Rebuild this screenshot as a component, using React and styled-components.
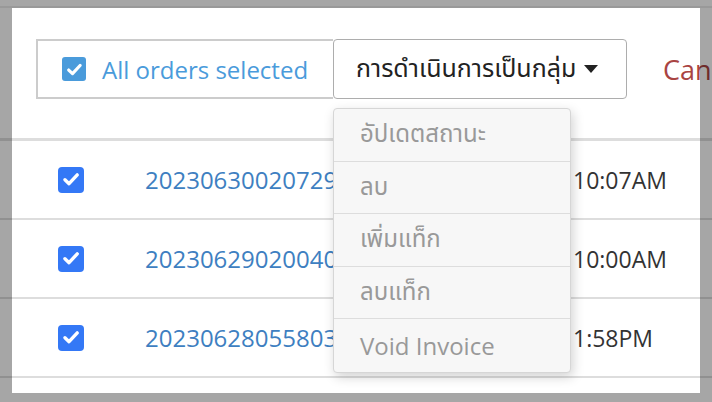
import styled, { createGlobalStyle } from "styled-components";

const GlobalStyle = createGlobalStyle`
  body {
    margin: 0;
    background: #ffffff;
    font-family: "Open Sans", "Noto Sans", "Noto Sans Thai", sans-serif;
  }
`;

const Page = styled.div`
  position: relative;
  width: 712px;
  height: 402px;
  overflow: hidden;
  background: #ffffff;
`;

const TopRule = styled.div`
  height: 6px;
  border-bottom: 2px solid #ebebeb;
`;

const Toolbar = styled.div`
  display: flex;
  align-items: center;
  height: 133px;
  box-sizing: border-box;
  padding-left: 36px;
  padding-bottom: 8px;
  border-bottom: 3px solid #dddddd;
`;

const SelectAllBox = styled.div`
  display: flex;
  align-items: center;
  flex: none;
  gap: 16px;
  width: 297px;
  height: 60px;
  box-sizing: border-box;
  padding-left: 24px;
  border: 2px solid #cccccc;
  border-right: none;
`;

const SelectAllText = styled.span`
  font-size: 24px;
  color: #4a9bdb;
  white-space: nowrap;
`;

const BulkButton = styled.button`
  display: flex;
  align-items: center;
  flex: none;
  gap: 8px;
  width: 294px;
  height: 60px;
  box-sizing: border-box;
  padding: 0 0 0 22px;
  background: #ffffff;
  border: 1.5px solid #adadad;
  border-radius: 4px;
  font-family: "Open Sans", "Noto Sans", "Noto Sans Thai", sans-serif;
  font-size: 25px;
  color: #222222;
  white-space: nowrap;
`;

const Caret = styled.span`
  width: 0;
  height: 0;
  border-left: 7px solid transparent;
  border-right: 7px solid transparent;
  border-top: 8px solid #222222;
`;

const CancelLink = styled.span`
  flex: none;
  margin-left: 36px;
  font-size: 27px;
  color: #a94442;
  white-space: nowrap;
`;

const Row = styled.div`
  display: flex;
  align-items: center;
  height: 79px;
  box-sizing: border-box;
  padding-left: 58px;
  border-bottom: 2px solid #dddddd;
`;

const Box = styled.span`
  display: flex;
  align-items: center;
  justify-content: center;
  flex: none;
  width: ${(p) => p.$size}px;
  height: ${(p) => p.$size}px;
  border-radius: ${(p) => (p.$size > 24 ? 4 : 3)}px;
  background: ${(p) => p.$color};
`;

const OrderNo = styled.span`
  flex: none;
  width: 428px;
  margin-left: 61px;
  overflow: hidden;
  font-size: 24px;
  color: #3e7fc1;
  white-space: nowrap;
`;

const TimeCell = styled.span`
  font-size: 23px;
  color: #333333;
  white-space: nowrap;
`;

const Menu = styled.ul`
  position: absolute;
  left: 333px;
  top: 108px;
  width: 238px;
  margin: 0;
  padding: 0;
  list-style: none;
  background: #f7f7f7;
  border: 1px solid #d6d6d6;
  border-radius: 4px;
  box-sizing: border-box;
  box-shadow: 2px 4px 12px rgba(0, 0, 0, 0.18);
`;

const MenuItem = styled.li`
  display: flex;
  align-items: center;
  height: 52.5px;
  box-sizing: border-box;
  padding-left: 26px;
  font-size: 24px;
  color: #999999;
  white-space: nowrap;
  &:not(:last-child) {
    border-bottom: 1.5px solid #dddddd;
  }
`;

const Spotlight = styled.div`
  position: absolute;
  left: 12px;
  top: 8px;
  width: 688px;
  height: 385px;
  box-shadow: 0 0 0 900px rgba(0, 0, 0, 0.35);
  pointer-events: none;
`;

function Check({ size }) {
  return (
    <svg width={size * 0.7} height={size * 0.7} viewBox="0 0 16 16">
      <path
        d="M2.6 8.6 L6.2 12 L13.4 4.3"
        fill="none"
        stroke="#ffffff"
        strokeWidth="3"
        strokeLinecap="round"
        strokeLinejoin="round"
      />
    </svg>
  );
}

const orders = [
  { no: "20230630020729", time: "10:07AM" },
  { no: "20230629020040", time: "10:00AM" },
  { no: "20230628055803", time: "1:58PM" },
];

const actions = ["อัปเดตสถานะ", "ลบ", "เพิ่มแท็ก", "ลบแท็ก", "Void Invoice"];

export default function App() {
  return (
    <Page>
      <GlobalStyle />
      <TopRule />
      <Toolbar>
        <SelectAllBox>
          <Box $size={24} $color="#4a9bdb">
            <Check size={24} />
          </Box>
          <SelectAllText>All orders selected</SelectAllText>
        </SelectAllBox>
        <BulkButton>
          การดำเนินการเป็นกลุ่ม
          <Caret />
        </BulkButton>
        <CancelLink>Cancel</CancelLink>
      </Toolbar>
      {orders.map((o) => (
        <Row key={o.no}>
          <Box $size={26} $color="#3478f6">
            <Check size={26} />
          </Box>
          <OrderNo>{o.no}</OrderNo>
          <TimeCell>{o.time}</TimeCell>
        </Row>
      ))}
      <Menu>
        {actions.map((a) => (
          <MenuItem key={a}>{a}</MenuItem>
        ))}
      </Menu>
      <Spotlight />
    </Page>
  );
}
